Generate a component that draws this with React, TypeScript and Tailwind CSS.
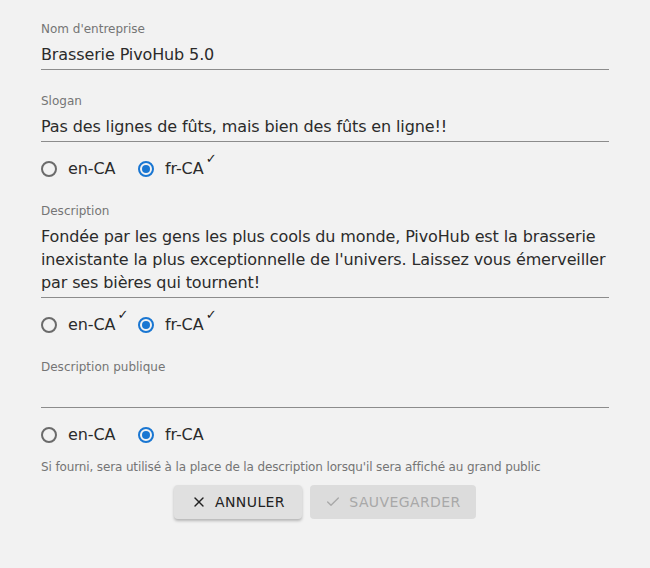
import { X, Check } from 'lucide-react'

const FONT = "font-['DejaVu_Sans','Noto_Sans',sans-serif]"

function Field({ label, value, lines = 1 }: { label: string; value?: string; lines?: number }) {
  return (
    <div className="border-b border-[#8c8c8c]">
      <p className="text-[12px] leading-4 text-[#757575]">{label}</p>
      <div
        className="mt-[6px] pb-[3px] text-[16px] leading-[23px] tracking-[-0.12px] text-[#2b2b2b]"
        style={{ minHeight: lines * 23 + 3 }}
      >
        {value}
      </div>
    </div>
  )
}

function Radio({ label, checked, done }: { label: string; checked?: boolean; done?: boolean }) {
  return (
    <label className="flex w-[97px] items-center gap-[11px]">
      <span
        className={
          checked
            ? 'flex h-[16px] w-[16px] items-center justify-center rounded-full border-2 border-[#1976d2]'
            : 'flex h-[16px] w-[16px] items-center justify-center rounded-full border-2 border-[#6b6b6b]'
        }
      >
        {checked && <span className="h-[8px] w-[8px] rounded-full bg-[#1976d2]" />}
      </span>
      <span className="relative text-[16px] tracking-[-0.12px] text-[#2b2b2b]">
        {label}
        {done && (
          <span className="absolute -right-[13px] -top-[6px] text-[13px] font-bold leading-4 text-[#1a1a1a]">✓</span>
        )}
      </span>
    </label>
  )
}

function LangRow({ enDone, frDone }: { enDone?: boolean; frDone?: boolean }) {
  return (
    <div className="flex h-[24px] items-center">
      <Radio label="en-CA" done={enDone} />
      <Radio label="fr-CA" checked done={frDone} />
    </div>
  )
}

export default function App() {
  return (
    <div className={`min-h-[568px] w-[650px] bg-[#f2f2f2] ${FONT}`}>
      <div className="mx-[41px] pt-[21px]">
        <Field label="Nom d'entreprise" value="Brasserie PivoHub 5.0" />
        <div className="mt-[23px]">
          <Field label="Slogan" value="Pas des lignes de fûts, mais bien des fûts en ligne!!" />
        </div>
        <div className="mt-[15px]">
          <LangRow frDone />
        </div>
        <div className="mt-[22px]">
          <Field
            label="Description"
            lines={3}
            value="Fondée par les gens les plus cools du monde, PivoHub est la brasserie inexistante la plus exceptionnelle de l'univers. Laissez vous émerveiller par ses bières qui tournent!"
          />
        </div>
        <div className="mt-[15px]">
          <LangRow enDone frDone />
        </div>
        <div className="mt-[22px]">
          <Field label="Description publique" value="" />
        </div>
        <div className="mt-[15px]">
          <LangRow />
        </div>
        <p className="mt-[12px] text-[12px] leading-4 tracking-[-0.13px] text-[#757575]">
          Si fourni, sera utilisé à la place de la description lorsqu'il sera affiché au grand public
        </p>
        <div className="mt-[10px] flex justify-center gap-[8px]">
          <button className="flex h-[34px] w-[128px] items-center justify-center gap-[8px] rounded-[4px] bg-[#e0e0e0] text-[14px] font-medium tracking-[0.4px] text-[#222] shadow-[0_2px_3px_rgba(0,0,0,0.25)]">
            <X size={16} strokeWidth={2} />
            ANNULER
          </button>
          <button className="flex h-[34px] w-[166px] items-center justify-center gap-[8px] rounded-[4px] bg-[#dcdcdc] text-[14px] font-medium tracking-[0.4px] text-[#a8a8a8]">
            <Check size={16} strokeWidth={2} />
            SAUVEGARDER
          </button>
        </div>
      </div>
    </div>
  )
}
